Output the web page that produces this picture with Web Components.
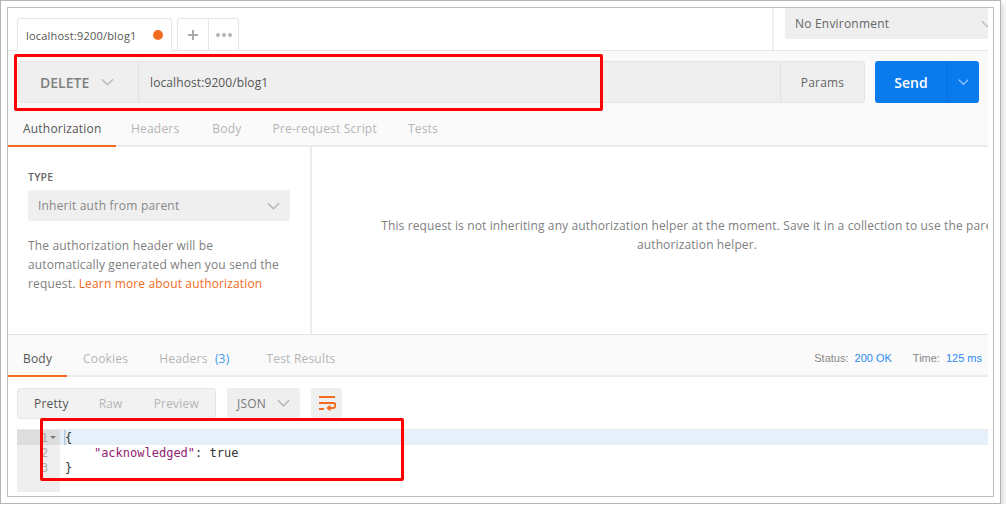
<!DOCTYPE html>
<html>
<head>
<meta charset="utf-8">
<style>
  html, body { margin: 0; background: #fff; }
  body { font-family: "Open Sans", "Noto Sans", sans-serif; font-size: 12px; color: #555; letter-spacing: .2px; }
</style>
</head>
<body>
<app-frame>
  <tab-strip></tab-strip>
  <request-bar></request-bar>
  <auth-pane></auth-pane>
  <response-pane></response-pane>
</app-frame>
<annotation-box style="left:14px;top:54px;width:583px;height:51px"></annotation-box>
<annotation-box style="left:40px;top:418px;width:358px;height:57px"></annotation-box>

<script>
const CHEVRON = (color, w = 13) => `<svg width="${w}" height="8" viewBox="0 0 14 8" fill="none" stroke="${color}" stroke-width="1.6"><path d="M1 1l6 6 6-6"/></svg>`;

class AppFrame extends HTMLElement {
  constructor() {
    super();
    this.attachShadow({ mode: "open" }).innerHTML = `
      <style>
        :host {
          display: block; box-sizing: border-box; width: 1001px; height: 504px;
          border: 1px solid #b4b4b4; padding: 6px; background: #fff;
          box-shadow: 3px 3px 5px #ddd;
        }
        .inner { box-sizing: border-box; height: 100%; border: 1px solid #bdbdbd; padding-right: 5px; }
        .app { height: 100%; overflow: hidden; display: flex; flex-direction: column; }
      </style>
      <div class="inner"><div class="app"><slot></slot></div></div>`;
  }
}

class TabStrip extends HTMLElement {
  constructor() {
    super();
    this.attachShadow({ mode: "open" }).innerHTML = `
      <style>
        :host { display: flex; height: 43px; box-sizing: border-box; border-bottom: 1px solid #e6e6e6; flex: none; }
        .tabs { flex: 1; display: flex; align-items: flex-end; padding-left: 9px; }
        .tab {
          box-sizing: border-box; width: 155px; height: 33px; margin-bottom: -1px; background: #fff;
          border: 1px solid #e6e6e6; border-bottom: 0; border-radius: 3px 3px 0 0;
          display: flex; align-items: center; justify-content: space-between; padding: 0 8px 0 8px;
          font-size: 11px; color: #555;
        }
        .dot { width: 10px; height: 10px; border-radius: 50%; background: #f26b21; }
        .actions { display: flex; margin-left: 5px; height: 32px; border: 1px solid #e6e6e6; border-bottom: 0; border-radius: 3px 3px 0 0; box-sizing: border-box; }
        .btn { display: flex; align-items: center; justify-content: center; color: #aaa; }
        .plus { width: 30px; border-right: 1px solid #e6e6e6; }
        .more { width: 29px; gap: 2px; }
        .more i { width: 4px; height: 4px; border-radius: 50%; background: #b5b5b5; }
        .env { width: 216px; flex: none; box-sizing: border-box; border-left: 2px solid #efefef; padding-left: 11px; height: 42px; }
        .select {
          width: 215px; height: 31px; background: #efefef; border-radius: 0 0 3px 3px; box-sizing: border-box;
          display: flex; align-items: center; justify-content: space-between; padding: 0 6px 0 10px;
          font-size: 12px; color: #666;
        }
      </style>
      <div class="tabs">
        <div class="tab"><span>localhost:9200/blog1</span><span class="dot"></span></div>
        <div class="actions">
          <div class="btn plus"><svg width="10" height="10" viewBox="0 0 10 10" fill="#aaa"><path d="M4 0h2v4h4v2H6v4H4V6H0V4h4z"/></svg></div>
          <div class="btn more"><i></i><i></i><i></i></div>
        </div>
      </div>
      <div class="env"><div class="select"><span>No Environment</span>${CHEVRON("#bbb")}</div></div>`;
  }
}

class RequestBar extends HTMLElement {
  constructor() {
    super();
    this.attachShadow({ mode: "open" }).innerHTML = `
      <style>
        :host { display: block; flex: none; height: 96px; box-sizing: border-box; background: #fafafa; border-bottom: 2px solid #ececec; }
        .row { display: flex; height: 42px; padding: 10px 9px 0 10px; }
        .group { flex: 1; display: flex; background: #efefef; border: 1px solid #e4e4e4; border-radius: 3px; box-sizing: border-box; }
        .method {
          width: 120px; box-sizing: border-box; border-right: 1px solid #e0e0e0; display: flex; align-items: center; gap: 12px;
          padding-left: 21px; font-size: 14px; font-weight: 600; color: #808080; letter-spacing: 0;
        }
        .url { flex: 1; display: flex; align-items: center; padding-left: 11px; font-size: 12px; color: #555; letter-spacing: .1px; }
        .params { width: 83px; border-left: 1px solid #e0e0e0; display: flex; align-items: center; justify-content: center; font-size: 12px; color: #666; }
        .send {
          width: 104px; margin-left: 10px; display: flex; background: #097bed; border-radius: 3px; color: #fff;
          font-size: 14px; font-weight: 600; letter-spacing: 0;
        }
        .send span { width: 73px; display: flex; align-items: center; justify-content: center; border-right: 1px solid #0a6fd4; box-sizing: border-box; }
        .send b { flex: 1; display: flex; align-items: center; justify-content: center; }
        nav { display: flex; padding-top: 11px; height: 33px; box-sizing: border-box; }
        nav a { box-sizing: border-box; display: block; font-size: 12px; color: #b5b5b5; line-height: 30px; }
        nav a.on { color: #555; border-bottom: 2px solid #f26b21; height: 33px; width: 108px; padding-left: 15px; }
      </style>
      <div class="row">
        <div class="group">
          <div class="method"><span>DELETE</span>${CHEVRON("#bbb", 13)}</div>
          <div class="url">localhost:9200/blog1</div>
          <div class="params">Params</div>
        </div>
        <div class="send"><span>Send</span><b>${CHEVRON("#9fd0ff", 11)}</b></div>
      </div>
      <nav>
        <a class="on">Authorization</a>
        <a style="margin-left:15px">Headers</a>
        <a style="margin-left:33px">Body</a>
        <a style="margin-left:31px">Pre-request Script</a>
        <a style="margin-left:31px">Tests</a>
      </nav>`;
  }
}

class AuthPane extends HTMLElement {
  constructor() {
    super();
    this.attachShadow({ mode: "open" }).innerHTML = `
      <style>
        :host { display: flex; flex: none; height: 187px; box-sizing: border-box; background: #fff; }
        .side { width: 304px; flex: none; box-sizing: border-box; border-right: 2px solid #ececec; padding: 22px 20px 0 20px; }
        .label { font-size: 10.5px; font-weight: 600; color: #666; line-height: 17px; }
        .select {
          margin-top: 4px; height: 31px; background: #efefef; border-radius: 3px; display: flex; align-items: center;
          justify-content: space-between; padding: 0 10px; font-size: 12px; color: #888; width: 262px; box-sizing: border-box;
        }
        p { margin: 15px 0 0; width: 262px; font-size: 12px; line-height: 19px; color: #808080; letter-spacing: .15px; }
        p a { color: #f26b21; }
        .msg { flex: 1; min-width: 0; overflow: hidden; padding: 69px 0 0 55px; font-size: 12px; line-height: 19px; color: #808080; text-align: center; letter-spacing: .13px; }
        .msg div { width: 660px; }
      </style>
      <div class="side">
        <div class="label">TYPE</div>
        <div class="select"><span>Inherit auth from parent</span>${CHEVRON("#b5b5b5")}</div>
        <p>The authorization header will be automatically generated when you send the request. <a>Learn more about authorization</a></p>
      </div>
      <div class="msg"><div>This request is not inheriting any authorization helper at the moment. Save it in a collection to use the parent's authorization helper.</div></div>`;
  }
}

class ResponsePane extends HTMLElement {
  constructor() {
    super();
    this.attachShadow({ mode: "open" }).innerHTML = `
      <style>
        :host { display: block; flex: 1; border-top: 1px solid #e2e2e2; background: #fff; }
        .tabs { height: 42px; box-sizing: border-box; background: #fafafa; border-bottom: 2px solid #ececec; display: flex; font-size: 12px; color: #b5b5b5; line-height: 48px; }
        .tabs a { display: block; box-sizing: border-box; }
        .tabs a.on { width: 59px; height: 42px; padding-left: 15px; color: #555; border-bottom: 2px solid #f26b21; }
        .tabs sup { all: unset; color: #3d97f0; margin-left: 4px; }
        .status { margin-left: auto; padding-right: 6px; font: 11px/46px "Liberation Sans", sans-serif; letter-spacing: 0; color: #888; display: flex; gap: 6px; }
        .status b { font-weight: 400; color: #2a8bef; }
        .tools { display: flex; padding: 11px 0 0 9px; height: 52px; box-sizing: border-box; }
        .seg {
          width: 199px; height: 31px; box-sizing: border-box; background: #f2f2f2; border: 1px solid #e6e6e6; border-radius: 3px;
          display: flex; align-items: center; font-size: 12px; color: #b5b5b5; padding-left: 16px;
        }
        .seg span:first-child { color: #555; }
        .json {
          margin-left: 11px; width: 73px; height: 30px; background: #efefef; border-radius: 3px; display: flex; align-items: center;
          justify-content: space-between; box-sizing: border-box; padding: 0 10px; font-size: 12px; color: #777;
        }
        .wrap { margin-left: 11px; width: 31px; height: 30px; background: #efefef; border-radius: 3px; display: flex; align-items: center; justify-content: center; }
        .editor { margin-left: 9px; border-top: 1px solid #e8e8e8; font: 12px/17px "DejaVu Sans Mono", monospace; letter-spacing: 0; position: relative; height: 62px; display: flex; }
        .gutter { width: 43px; flex: none; background: #efefef; color: #aaa; height: 62px; position: relative; }
        .gutter div { height: 15px; padding-left: 24px; }
        .gutter div:first-child { background: #ddd; }
        .gutter i { position: absolute; left: 33px; top: 6px; border: 3px solid transparent; border-top: 3px solid #777; border-bottom: 0; }
        .code { flex: 1; color: #333; }
        .code div { height: 15px; padding-left: 5px; }
        .code div:first-child { background: linear-gradient(#b9c7d8, #b9c7d8) 4px 0 / 1.5px 100% no-repeat, #e6f0fb; }
        .key { color: #92216f; }
      </style>
      <div class="tabs">
        <a class="on">Body</a>
        <a style="margin-left:16px">Cookies</a>
        <a style="margin-left:31px">Headers <sup>(3)</sup></a>
        <a style="margin-left:37px">Test Results</a>
        <div class="status">
          <span>Status:</span><b>200 OK</b><span style="margin-left:15px">Time:</span><b>125 ms</b>
        </div>
      </div>
      <div class="tools">
        <div class="seg"><span>Pretty</span><span style="margin-left:30px">Raw</span><span style="margin-left:31px">Preview</span></div>
        <div class="json"><span>JSON</span>${CHEVRON("#b5b5b5")}</div>
        <div class="wrap"><svg width="18" height="16" viewBox="0 0 18 16" fill="none" stroke="#f26b21" stroke-width="2"><path d="M1 2h16M1 8h14a2.500 2.500 0 0 1 0 5h-5M1 14h5"/><path stroke-width="1.500" d="M12.500 10.500l-3 2.500 3 2.500"/></svg></div>
      </div>
      <div class="editor">
        <div class="gutter"><div>1</div><div>2</div><div>3</div><i></i></div>
        <div class="code">
          <div>{</div>
          <div>&nbsp;&nbsp;&nbsp;&nbsp;<span class="key">"acknowledged"</span>: true</div>
          <div>}</div>
        </div>
      </div>`;
  }
}

class AnnotationBox extends HTMLElement {
  constructor() {
    super();
    this.attachShadow({ mode: "open" }).innerHTML = `
      <style>:host { display: block; position: absolute; border: 3px solid #f00; border-radius: 2px; }</style>`;
  }
}

customElements.define("app-frame", AppFrame);
customElements.define("tab-strip", TabStrip);
customElements.define("request-bar", RequestBar);
customElements.define("auth-pane", AuthPane);
customElements.define("response-pane", ResponsePane);
customElements.define("annotation-box", AnnotationBox);
</script>
</body>
</html>
